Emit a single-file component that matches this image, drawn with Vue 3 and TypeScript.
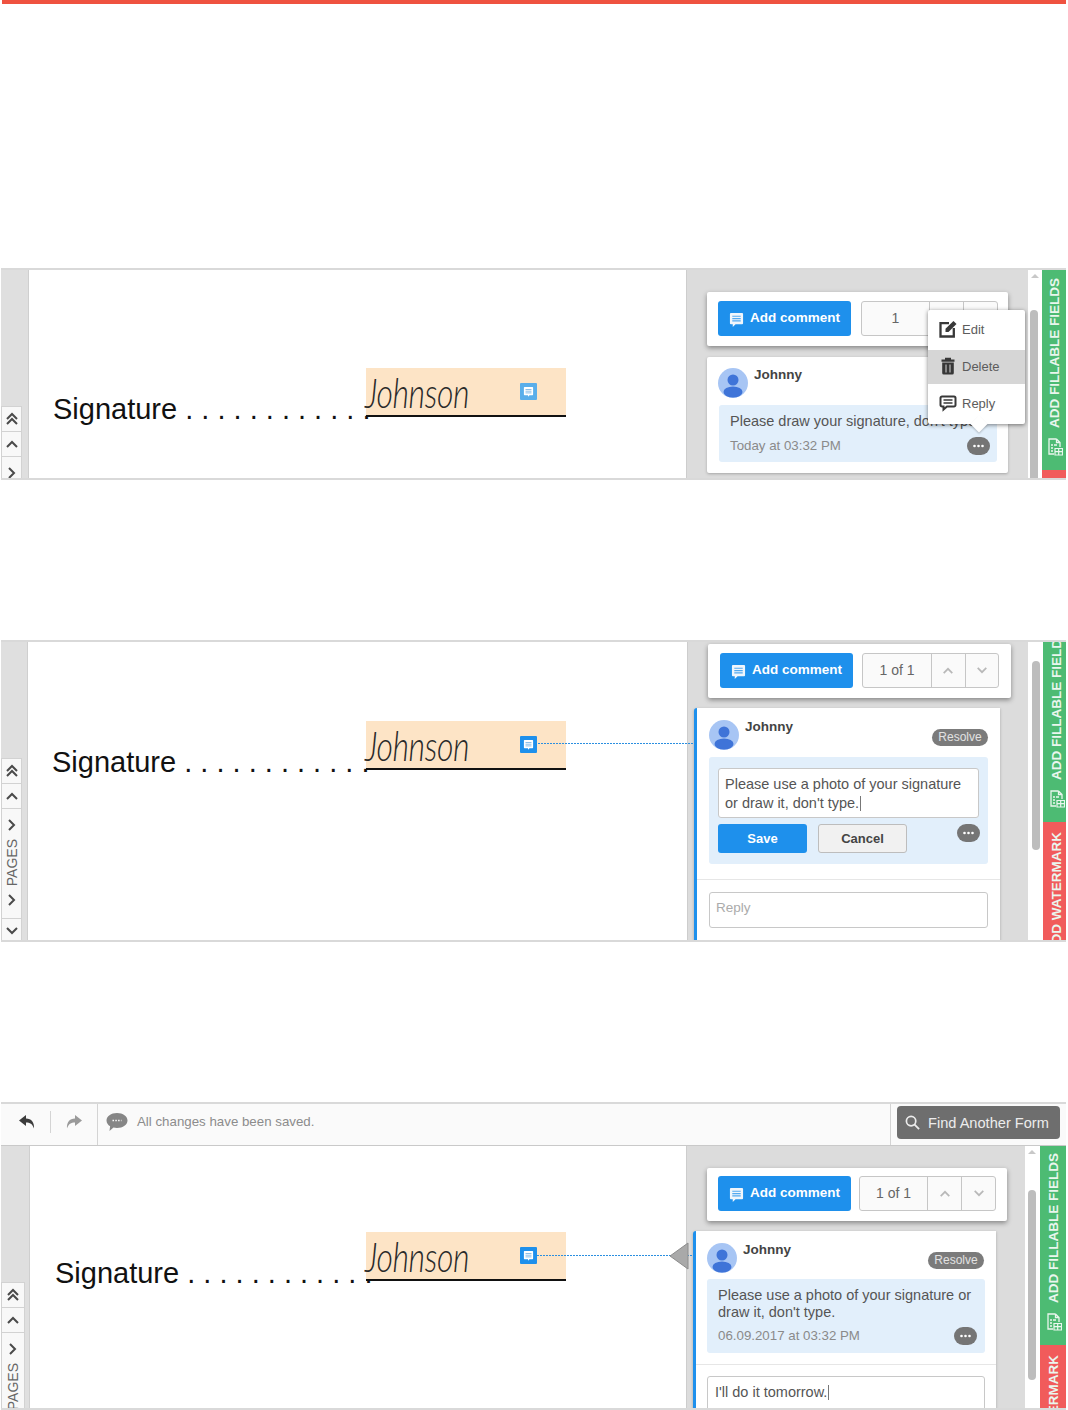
<script setup lang="ts">
type Mode = "menu" | "edit" | "reply";

type Panel = {
  mode: Mode;
  counter: string;
};

const panels: Array<Panel> = [
  { mode: "menu", counter: "1" },
  { mode: "edit", counter: "1 of 1" },
  { mode: "reply", counter: "1 of 1" },
];
</script>

<template>
  <svg class="defs" aria-hidden="true">
    <symbol id="i-comment" viewBox="0 0 16 16">
      <path d="M2 1h12a1 1 0 0 1 1 1v10a1 1 0 0 1-1 1H7l-3 3v-3H2a1 1 0 0 1-1-1V2a1 1 0 0 1 1-1z" fill="currentColor" />
      <path d="M3.5 4.5h9M3.5 7h9M3.5 9.5h9" stroke="#1e90ec" stroke-width="1.2" opacity="0.75" />
    </symbol>
    <symbol id="i-marker" viewBox="0 0 17 17">
      <path d="M4.5 4h8a.6.6 0 0 1 .6.6v7a.6.6 0 0 1-.6.6H9.5l-1.5 1.6v-1.6H4.500a.6.6 0 0 1-.6-.6v-7a.6.6 0 0 1 .6-.6z" fill="#fff" />
      <path d="M5.500 6.500h6M5.500 8.200h6M5.500 9.900h6" stroke="#8dbfe8" stroke-width="1" />
    </symbol>
    <symbol id="i-avatar" viewBox="0 0 30 30">
      <circle cx="15" cy="15" r="15" fill="#a7c5f4" />
      <circle cx="15" cy="12" r="5.500" fill="#3f74d8" />
      <ellipse cx="15" cy="24" rx="9.500" ry="5.500" fill="#3f74d8" />
    </symbol>
    <symbol id="i-dots" viewBox="0 0 23 18">
      <rect width="23" height="18" rx="9" fill="#757575" />
      <circle cx="7.500" cy="9" r="1.300" fill="#fff" />
      <circle cx="11.500" cy="9" r="1.300" fill="#fff" />
      <circle cx="15.500" cy="9" r="1.300" fill="#fff" />
    </symbol>
    <symbol id="i-up" viewBox="0 0 14 10">
      <path d="M2 8l5-5 5 5" fill="none" stroke="currentColor" stroke-width="2" />
    </symbol>
    <symbol id="i-double" viewBox="0 0 14 14">
      <path d="M2 7l5-5 5 5M2 12l5-5 5 5" fill="none" stroke="currentColor" stroke-width="2" />
    </symbol>
    <symbol id="i-form" viewBox="0 0 16 18">
      <path d="M9.500 1H2v15h5M9.500 1L13 4.500V9M9.500 1v3.500H13" fill="none" stroke="currentColor" stroke-width="1.300" />
      <path d="M4 7h2M7 7h3M4 10h2M4 13h2" stroke="currentColor" stroke-width="1.300" />
      <path d="M8 10.500h7.500V17H8zM8 13.700h7.500M11.700 10.500V17" fill="none" stroke="currentColor" stroke-width="1.200" />
    </symbol>
    <symbol id="i-edit" viewBox="0 0 18 18">
      <path d="M10 3.200H1.500v13.300h13.300V8" fill="none" stroke="currentColor" stroke-width="2.300" />
      <path d="M6.500 12V8.800L14.500 1 17.500 4l-8 8z" fill="currentColor" />
    </symbol>
    <symbol id="i-trash" viewBox="0 0 18 18">
      <path d="M6 2.500V.8h6v1.700h3.500v2.200h-13V2.500z" fill="currentColor" />
      <path d="M3.200 5.500h11.600V16a1.500 1.500 0 0 1-1.500 1.500H4.700A1.500 1.500 0 0 1 3.200 16zM6.500 7.500v8h1v-8zM10.500 7.500v8h1v-8z" fill="currentColor" fill-rule="evenodd" />
    </symbol>
    <symbol id="i-reply" viewBox="0 0 18 18">
      <path d="M3 2.500h12a1.500 1.500 0 0 1 1.500 1.500v7a1.500 1.500 0 0 1-1.500 1.500H8l-3.500 3v-3H3A1.500 1.500 0 0 1 1.500 11V4A1.500 1.500 0 0 1 3 2.500z" fill="none" stroke="currentColor" stroke-width="2" />
      <path d="M4.500 6h9M4.500 9h9" stroke="currentColor" stroke-width="1.600" />
    </symbol>
    <symbol id="i-undo" viewBox="0 0 18 16">
      <path d="M8 1L1 6.500 8 12V8.500c4 0 6.500 1.500 8 6 .5-6-2.500-10-8-10z" fill="currentColor" />
    </symbol>
    <symbol id="i-chat" viewBox="0 0 22 20">
      <path d="M11 1c6 0 10.500 3.300 10.500 7.500S17 16 11 16c-1.300 0-2.500-.1-3.500-.4L3.500 19l.6-4.700C2 13 .5 10.900.5 8.500.5 4.300 5 1 11 1z" fill="currentColor" />
      <path d="M6.500 8.500h9" stroke="#fafafa" stroke-width="1.600" stroke-dasharray="1.500 1.300" />
    </symbol>
    <symbol id="i-search" viewBox="0 0 16 16">
      <circle cx="6.500" cy="6.500" r="5" fill="none" stroke="currentColor" stroke-width="1.800" />
      <path d="M10 10l5 5" stroke="currentColor" stroke-width="2" />
    </symbol>
  </svg>

  <div class="page">
    <div class="top-bar"></div>

    <section v-for="panel in panels" :key="panel.mode" class="panel" :class="panel.mode">
      <header v-if="panel.mode === 'reply'" class="toolbar">
        <div class="history">
          <svg class="undo"><use href="#i-undo" /></svg>
          <span class="history-sep"></span>
          <svg class="redo"><use href="#i-undo" /></svg>
        </div>
        <div class="status">
          <svg class="chat"><use href="#i-chat" /></svg>
          <span>All changes have been saved.</span>
        </div>
        <div class="find-wrap">
          <div class="find">
            <svg class="search"><use href="#i-search" /></svg>
            <span>Find Another Form</span>
          </div>
        </div>
      </header>

      <div class="body">
        <aside class="rail">
          <div class="rail-btn"><svg class="ic14"><use href="#i-double" /></svg></div>
          <div class="rail-btn"><svg class="ic-up"><use href="#i-up" /></svg></div>
          <div class="rail-pages">
            <svg class="ic-up right"><use href="#i-up" /></svg>
            <span class="pages-label">PAGES</span>
            <svg class="ic-up right"><use href="#i-up" /></svg>
          </div>
          <div class="rail-btn"><svg class="ic-up down"><use href="#i-up" /></svg></div>
        </aside>

        <main class="doc">
          <div class="sign-row">
            <span class="sign-label">Signature . . . . . . . . . . . .</span>
            <div class="field">
              <span class="hand">Johnson</span>
              <span class="marker"><svg><use href="#i-marker" /></svg></span>
            </div>
          </div>
        </main>

        <div v-if="panel.mode !== 'menu'" class="connector"></div>
        <svg v-if="panel.mode === 'reply'" class="pointer" viewBox="0 0 20 28">
          <path d="M19 1v26L1 14z" fill="#a9a9a9" stroke="#8c8c8c" />
        </svg>

        <div class="side">
          <div class="card">
            <button class="add-btn">
              <svg><use href="#i-comment" /></svg>
              Add comment
            </button>
            <div class="counter">
              <span class="count">{{ panel.counter }}</span>
              <span class="step"><svg><use href="#i-up" /></svg></span>
              <span class="step"><svg class="down"><use href="#i-up" /></svg></span>
            </div>
          </div>

          <article class="comment">
            <div class="comment-head">
              <svg class="avatar"><use href="#i-avatar" /></svg>
              <span class="author">Johnny</span>
              <span v-if="panel.mode !== 'menu'" class="resolve">Resolve</span>
            </div>

            <div v-if="panel.mode === 'menu'" class="bubble">
              <p class="msg">Please draw your signature, don't type</p>
              <div class="meta">
                <span>Today at 03:32 PM</span>
                <svg class="dots"><use href="#i-dots" /></svg>
              </div>
            </div>

            <div v-else-if="panel.mode === 'edit'" class="bubble">
              <div class="edit-box">Please use a photo of your signature<br />or draw it, don't type.<i class="caret"></i></div>
              <div class="edit-actions">
                <button class="save">Save</button>
                <button class="cancel">Cancel</button>
                <svg class="dots"><use href="#i-dots" /></svg>
              </div>
            </div>

            <div v-else class="bubble">
              <p class="msg">Please use a photo of your signature or<br />draw it, don't type.</p>
              <div class="meta">
                <span>06.09.2017 at 03:32 PM</span>
                <svg class="dots"><use href="#i-dots" /></svg>
              </div>
            </div>

            <template v-if="panel.mode !== 'menu'">
              <div class="divider"></div>
              <div class="reply-box" :class="{ empty: panel.mode === 'edit' }">
                <template v-if="panel.mode === 'edit'">Reply</template>
                <template v-else>I'll do it tomorrow.<i class="caret"></i></template>
              </div>
            </template>
          </article>

          <div v-if="panel.mode === 'menu'" class="pop">
            <div class="pop-row tall"><svg><use href="#i-edit" /></svg>Edit</div>
            <div class="pop-row active"><svg><use href="#i-trash" /></svg>Delete</div>
            <div class="pop-row tall"><svg><use href="#i-reply" /></svg>Reply</div>
          </div>
        </div>

        <div class="scroll">
          <span class="scroll-arrow"></span>
          <span class="thumb"></span>
        </div>

        <div class="tabs">
          <div class="tab green">
            <span class="tab-text">ADD FILLABLE FIELDS</span>
            <svg class="tab-icon"><use href="#i-form" /></svg>
          </div>
          <div class="tab red">
            <span class="tab-text">ADD WATERMARK</span>
          </div>
        </div>
      </div>
    </section>
  </div>
</template>

<style>
html,
body {
  background: #fff;
}
</style>

<style scoped>
.defs {
  position: absolute;
  width: 0;
  height: 0;
}

.page {
  width: 1068px;
  height: 1410px;
  overflow: hidden;
  font-family: "Liberation Sans", Arial, sans-serif;
  color: #555;
}

.top-bar {
  height: 4px;
  margin: 0 2px;
  background: #ef5240;
}

.panel {
  display: flex;
  flex-direction: column;
  margin: 0 2px 0 1px;
  border-top: 2px solid #d9d9d9;
  border-bottom: 2px solid #d9d9d9;
  box-sizing: border-box;
  overflow: hidden;
}

.panel.menu {
  height: 212px;
  margin-top: 264px;
}

.panel.edit {
  height: 302px;
  margin-top: 160px;
}

.panel.reply {
  height: 308px;
  margin-top: 160px;
}

/* toolbar */
.toolbar {
  display: flex;
  flex: 0 0 42px;
  box-sizing: border-box;
  background: #fafafa;
  border-bottom: 1px solid #c9c9c9;
  align-items: stretch;
}

.history {
  display: flex;
  align-items: center;
  width: 97px;
  padding: 0 0 6px 17px;
  box-sizing: border-box;
  border-right: 1px solid #d4d4d4;
}

.undo,
.redo {
  width: 18px;
  height: 16px;
}

.undo {
  color: #3c3c3c;
}

.redo {
  color: #9a9a9a;
  margin-left: 14px;
  transform: scaleX(-1);
}

.history-sep {
  width: 1px;
  height: 22px;
  margin-left: 14px;
  background: #d4d4d4;
}

.status {
  display: flex;
  flex: 1;
  align-items: center;
  gap: 9px;
  padding: 0 0 6px 8px;
  font-size: 13.300px;
  color: #8c8c8c;
}

.chat {
  width: 22px;
  height: 20px;
  color: #868686;
}

.find-wrap {
  display: flex;
  width: 176px;
  box-sizing: border-box;
  padding: 2px 6px 0 6px;
  border-left: 1px solid #d4d4d4;
}

.find {
  display: flex;
  align-items: center;
  gap: 8px;
  width: 163px;
  height: 33px;
  padding-left: 8px;
  box-sizing: border-box;
  border-radius: 4px;
  background: #6e6e6e;
  color: #ececec;
  font-size: 14.600px;
  white-space: nowrap;
}

.search {
  width: 15px;
  height: 15px;
}

/* body */
.body {
  position: relative;
  display: flex;
  flex: 1;
  min-height: 0;
}

.rail {
  flex: 0 0 auto;
  box-sizing: border-box;
  background: #dfdfdf;
  border-right: 1px solid #cfcfcf;
  color: #4a4a4a;
}

.menu .rail {
  width: 28px;
  padding-top: 136px;
  padding-right: 6px;
}

.edit .rail {
  width: 27px;
  padding-top: 116px;
  padding-right: 5px;
}

.reply .rail {
  width: 29px;
  padding-top: 136px;
  padding-right: 4px;
}

.rail-btn {
  display: flex;
  height: 25px;
  align-items: center;
  justify-content: center;
  box-sizing: border-box;
  background: #f8f8f8;
  border: 1px solid #d2d2d2;
  border-bottom: 0;
}

.rail-pages {
  display: flex;
  flex-direction: column;
  align-items: center;
  height: 110px;
  padding-top: 11px;
  box-sizing: border-box;
  background: #f8f8f8;
  border: 1px solid #d2d2d2;
  border-bottom: 0;
}

.ic14 {
  width: 14px;
  height: 14px;
}

.ic-up {
  width: 14px;
  height: 10px;
}

.ic-up.right {
  transform: rotate(90deg);
}

.ic-up.down,
.step .down {
  transform: rotate(180deg);
}

.pages-label {
  writing-mode: vertical-rl;
  transform: rotate(180deg);
  font-size: 14px;
  line-height: 16px;
  color: #666;
  margin: 9px 0;
}

.doc {
  flex: 1;
  min-width: 0;
  background: #fff;
  box-sizing: border-box;
  border-right: 1px solid #cdcdcd;
}

.menu .doc {
  padding: 98px 0 0 24px;
}

.edit .doc {
  padding: 79px 0 0 24px;
}

.reply .doc {
  padding: 86px 0 0 25px;
}

.sign-row {
  display: flex;
  align-items: flex-end;
}

.sign-label {
  white-space: nowrap;
  font-size: 29px;
  line-height: 33px;
  color: #111;
  margin-bottom: -9px;
}

.menu .sign-label {
  width: 313px;
}

.edit .sign-label {
  width: 314px;
}

.reply .sign-label {
  width: 311px;
}

.field {
  display: flex;
  flex: 0 0 200px;
  height: 49px;
  box-sizing: border-box;
  background: #fde4c6;
  border-bottom: 2px solid #111;
  justify-content: space-between;
  align-items: center;
  overflow: visible;
}

.hand {
  font-family: Lato, "Open Sans", sans-serif;
  font-style: italic;
  font-weight: 300;
  font-size: 41px;
  line-height: 46px;
  color: #2a2a2a;
  margin: 3px 0 0 -1px;
  transform: scaleX(0.78);
  transform-origin: left center;
  letter-spacing: -0.5px;
}

.marker {
  display: flex;
  width: 17px;
  height: 17px;
  margin-right: 29px;
  background: #1e90ec;
  border-radius: 1px;
}

.menu .marker {
  background: #5aaeea;
}

.marker svg {
  width: 17px;
  height: 17px;
}

/* connector and pointer lie over the document */
.connector {
  position: absolute;
  z-index: 1;
  height: 1px;
  background: repeating-linear-gradient(90deg, #2b8fe0 0 2px, transparent 2px 3px);
}

.edit .connector {
  left: 537px;
  top: 101px;
  width: 156px;
}

.reply .connector {
  left: 536px;
  top: 109px;
  width: 156px;
}

.pointer {
  position: absolute;
  z-index: 2;
  left: 668px;
  top: 96px;
  width: 20px;
  height: 28px;
}

/* comments column */
.side {
  position: relative;
  flex: 0 0 auto;
  box-sizing: border-box;
  background: #dcdcdc;
}

.menu .side {
  width: 341px;
  padding-top: 22px;
}

.edit .side {
  width: 340px;
  padding-top: 2px;
}

.reply .side {
  width: 338px;
  padding-top: 22px;
}

.card {
  display: flex;
  gap: 10px;
  margin-left: 20px;
  height: 54px;
  width: 301px;
  padding: 9px 0 0 11px;
  box-sizing: border-box;
  background: #fff;
  border-radius: 2px;
  box-shadow: 0 2px 5px rgba(0, 0, 0, 0.4);
}

.edit .card {
  width: 303px;
  padding-left: 12px;
  gap: 9px;
}

.reply .card {
  width: 300px;
  height: 53px;
  padding-top: 8px;
  gap: 8px;
}

.add-btn {
  display: flex;
  align-items: center;
  gap: 6px;
  width: 133px;
  height: 35px;
  padding: 0 0 2px 11px;
  box-sizing: border-box;
  border: 0;
  border-radius: 3px;
  background: #1e90ec;
  color: #fff;
  font: bold 13.500px "Liberation Sans", Arial, sans-serif;
  white-space: nowrap;
}

.add-btn svg {
  width: 15px;
  height: 15px;
  margin-top: 3px;
  color: #f0f6fc;
}

.counter {
  display: flex;
  width: 137px;
  height: 35px;
  box-sizing: border-box;
  background: #fafafa;
  border: 1px solid #c6c6c6;
  border-radius: 3px;
}

.count {
  flex: 1;
  text-align: center;
  font-size: 14px;
  line-height: 32px;
  color: #666;
}

.step {
  display: flex;
  align-items: center;
  justify-content: center;
  width: 34px;
  box-sizing: border-box;
  border-left: 1px solid #c6c6c6;
  color: #b8b8b8;
}

.edit .step {
  width: 33.500px;
}

.step svg {
  width: 12px;
  height: 9px;
}

.comment {
  box-sizing: border-box;
  margin-left: 20px;
  margin-top: 11px;
  width: 301px;
  height: 116px;
  padding: 11px 0 0 11px;
  background: #fff;
  border-radius: 2px;
  box-shadow: 0 1px 3px rgba(0, 0, 0, 0.25);
}

.edit .comment,
.reply .comment {
  margin-left: 6px;
  margin-top: 10px;
  height: 260px;
  padding: 12px 0 0 11px;
  border-left: 3px solid #1e90ec;
  border-radius: 3px 0 0 3px;
}

.edit .comment {
  width: 306px;
  padding-left: 12px;
}

.reply .comment {
  width: 303px;
}

.comment-head {
  display: flex;
  height: 37px;
}

.reply .comment-head {
  height: 36px;
}

.avatar {
  flex: 0 0 auto;
  width: 30px;
  height: 30px;
}

.author {
  margin-left: 6px;
  font-weight: bold;
  font-size: 13.500px;
  line-height: 14px;
  color: #444;
}

.resolve {
  margin: 9px 12px 0 auto;
  width: 56px;
  height: 17px;
  border-radius: 9px;
  background: #7b7b7b;
  color: #e2e2e2;
  font-size: 12px;
  line-height: 17px;
  text-align: center;
}

.bubble {
  box-sizing: border-box;
  background: #e2effb;
  border-radius: 3px;
  margin-right: 11px;
}

.menu .bubble {
  height: 57px;
  margin-left: 1px;
  padding: 8px 7px 0 11px;
}

.reply .bubble {
  height: 74px;
  padding: 8px 8px 0 11px;
}

.edit .bubble {
  height: 107px;
  padding: 11px 9px 0 9px;
  margin-right: 12px;
}

.msg {
  margin: 0;
  font-size: 14.500px;
  line-height: 17px;
  color: #555;
  white-space: nowrap;
}

.meta {
  display: flex;
  justify-content: space-between;
  align-items: center;
  margin-top: 6px;
  font-size: 13.300px;
  line-height: 18px;
  color: #8a8a8a;
}

.menu .meta {
  margin-top: 7px;
}

.dots {
  width: 23px;
  height: 18px;
  flex: 0 0 auto;
}

.edit-box {
  height: 50px;
  box-sizing: border-box;
  padding: 6px 6px 0 6px;
  background: #fff;
  border: 1px solid #c8c8c8;
  border-radius: 3px;
  font-size: 14.500px;
  line-height: 19px;
  color: #555;
  white-space: nowrap;
}

.caret {
  display: inline-block;
  width: 1px;
  height: 15px;
  margin-left: 1px;
  vertical-align: -3px;
  background: #777;
}

.edit-actions {
  display: flex;
  align-items: flex-start;
  margin-top: 6px;
}

.edit-actions .dots {
  margin-left: auto;
  margin-right: -1px;
}

.save,
.cancel {
  width: 89px;
  height: 29px;
  padding: 0;
  box-sizing: border-box;
  border-radius: 3px;
  font: bold 13px "Liberation Sans", Arial, sans-serif;
}

.save {
  border: 0;
  background: #1e90ec;
  color: #fff;
}

.cancel {
  margin-left: 11px;
  background: #f1f1f1;
  border: 1px solid #bdbdbd;
  color: #444;
}

.divider {
  height: 1px;
  background: #e6e6e6;
  margin: 15px 0 12px -12px;
}

.reply .divider {
  margin: 11px 0 11px -11px;
}

.reply-box {
  box-sizing: border-box;
  height: 36px;
  margin-right: 11px;
  padding-left: 7px;
  background: #fff;
  border: 1px solid #c8c8c8;
  border-radius: 3px;
  font-size: 14.500px;
  line-height: 30px;
  color: #555;
}

.edit .reply-box {
  margin-right: 12px;
  padding-left: 6px;
}

.reply-box.empty {
  color: #ababab;
  font-size: 13.500px;
}

.pop {
  position: absolute;
  z-index: 3;
  left: 241px;
  top: 40px;
  width: 97px;
  height: 114px;
  background: #fff;
  border-radius: 2px;
  box-shadow: 0 1px 4px rgba(0, 0, 0, 0.5);
  font-size: 13px;
  color: #5c5c5c;
}

.pop::after {
  content: "";
  position: absolute;
  left: 45px;
  bottom: -6px;
  width: 12px;
  height: 12px;
  background: #fff;
  transform: rotate(45deg);
  box-shadow: 1px 1px 2px rgba(0, 0, 0, 0.2);
}

.pop-row {
  display: flex;
  align-items: center;
  gap: 5px;
  height: 34px;
  padding: 0 0 2px 11px;
  box-sizing: border-box;
}

.pop-row.tall {
  height: 40px;
}

.pop-row.active {
  background: #d6d6d6;
}

.pop-row svg {
  width: 18px;
  height: 18px;
  color: #383838;
}

/* scrollbar */
.scroll {
  position: relative;
  flex: 0 0 auto;
  background: #fff;
  box-sizing: border-box;
}

.menu .scroll {
  width: 14px;
}

.edit .scroll {
  width: 15px;
}

.reply .scroll {
  width: 15px;
}

.scroll-arrow {
  position: absolute;
  left: 3px;
  top: 4px;
  border-left: 4px solid transparent;
  border-right: 4px solid transparent;
  border-bottom: 4px solid #c8c8c8;
}

.edit .scroll-arrow {
  display: none;
}

.thumb {
  position: absolute;
  left: 2px;
  width: 8px;
  border-radius: 4px;
  background: #bdbdbd;
}

.menu .thumb {
  top: 40px;
  height: 200px;
}

.edit .thumb {
  left: 4px;
  top: 19px;
  height: 189px;
}

.reply .thumb {
  left: 3px;
  top: 44px;
  height: 190px;
}

/* side tabs */
.tabs {
  display: flex;
  flex-direction: column;
  flex: 0 0 auto;
}

.menu .tabs {
  width: 24px;
}

.edit .tabs {
  width: 23px;
}

.reply .tabs {
  width: 26px;
}

.tab {
  display: flex;
  flex-direction: column;
  align-items: center;
  overflow: hidden;
  box-sizing: border-box;
  padding-left: 2px;
  color: #eaf6ee;
  font-weight: bold;
  font-size: 13.500px;
}

.edit .tab {
  padding-left: 4px;
}

.tab-text {
  flex: 0 0 auto;
  writing-mode: vertical-rl;
  transform: rotate(180deg);
  white-space: nowrap;
  line-height: 16px;
}

.tab.green {
  justify-content: flex-end;
  background: #4dbb73;
  padding-bottom: 14px;
}

.menu .green {
  flex: 0 0 200px;
}

.edit .green {
  flex: 0 0 180px;
}

.reply .green {
  flex: 0 0 199px;
}

.tab.red {
  flex: 1;
  background: #f15b5b;
  padding-top: 10px;
}

.tab-icon {
  flex: 0 0 auto;
  width: 16px;
  height: 18px;
  margin-top: 10px;
}
</style>
